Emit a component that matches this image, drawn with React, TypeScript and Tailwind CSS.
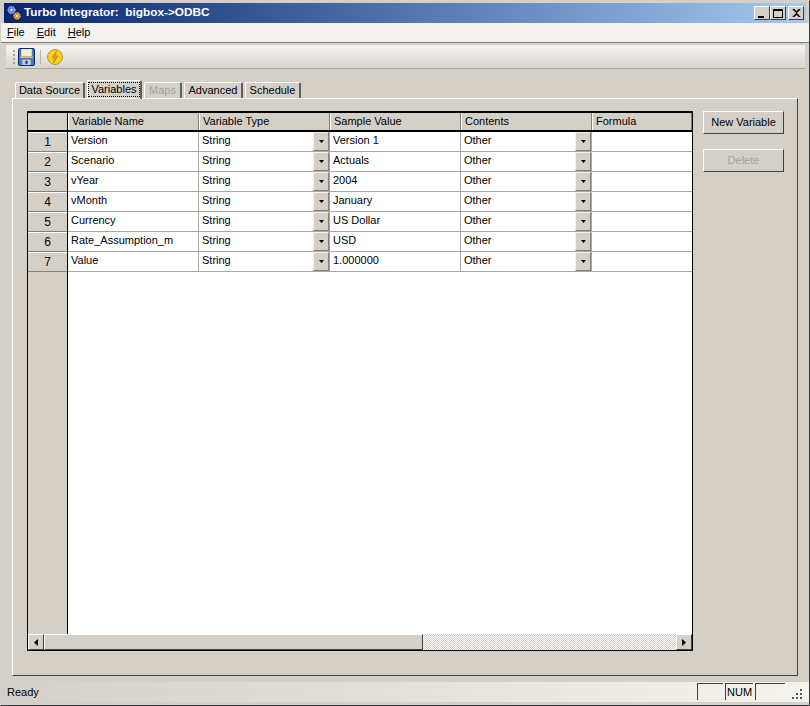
import React from 'react';

const rows = [
  { name: 'Version', sample: 'Version 1' },
  { name: 'Scenario', sample: 'Actuals' },
  { name: 'vYear', sample: '2004' },
  { name: 'vMonth', sample: 'January' },
  { name: 'Currency', sample: 'US Dollar' },
  { name: 'Rate_Assumption_m', sample: 'USD' },
  { name: 'Value', sample: '1.000000' },
];

const bevel = 'border border-t-white border-l-white border-r-[#404040] border-b-[#404040]';

function ComboCell({ value, width }: { value: string; width: string }) {
  return (
    <div className={`${width} flex h-full border-r border-[#a9a79f] bg-white`}>
      <div className="flex-1 pl-[3px] leading-[17px] truncate">{value}</div>
      <div className="w-[16px] bg-[#d4d0c8] flex items-center justify-center border border-t-[#f4f3ef] border-l-[#f4f3ef] border-r-[#808080] border-b-[#808080]">
        <svg width="5" height="3" viewBox="0 0 5 3"><path d="M0 0h5L2.500 3z" fill="#000" /></svg>
      </div>
    </div>
  );
}

function HeaderCell({ label, width }: { label: string; width: string }) {
  return (
    <div className={`${width} h-full pl-[3px] leading-[16px] border-r border-[#808080] border-l border-l-white bg-[#d4d0c8] truncate`}>{label}</div>
  );
}

function Tab({ label, active, disabled, width }: { label: string; active?: boolean; disabled?: boolean; width: string }) {
  return (
    <div
      className={`${width} ${active ? 'h-[19px] relative z-10 -mb-px' : 'h-[16px]'} flex items-center justify-center border-t border-l border-t-white border-l-white border-r-2 border-r-[#606060] rounded-t-[2px] mr-[2px] ${disabled ? 'text-[#a5a29b]' : 'text-black'}`}
    >
      <span className={active ? 'border border-dotted border-black px-[2px] leading-[13px] mb-[2px]' : 'leading-[13px]'}>{label}</span>
    </div>
  );
}

function CaptionButton({ children }: { children: React.ReactNode }) {
  return (
    <div className={`w-[16px] h-[14px] bg-[#d4d0c8] flex items-center justify-center ${bevel}`}>{children}</div>
  );
}

export default function App() {
  return (
    <div
      className="w-[810px] h-[706px] overflow-hidden bg-[#d4d0c8] flex flex-col text-[11px] text-black border border-[#d4d0c8] border-r-[#404040] border-b-[#404040] px-[3px] pt-[2px] pb-[3px]"
      style={{ fontFamily: '"Liberation Sans", Arial, sans-serif' }}
    >
      {/* title bar */}
      <div className="h-[20px] shrink-0 flex items-center bg-gradient-to-r from-[#0a246a] to-[#a6caf0] pl-[2px] pr-[2px]">
        <svg width="16" height="16" viewBox="0 0 16 16" className="shrink-0">
          <circle cx="5.500" cy="5" r="3.500" fill="#6f7fe0" stroke="#c8d0ff" strokeDasharray="1.500 1" />
          <circle cx="5.500" cy="5" r="1" fill="#fff" />
          <circle cx="11" cy="11" r="3.200" fill="#f08a20" stroke="#ffc070" strokeDasharray="1.500 1" />
          <circle cx="11" cy="11" r="1" fill="#fff" />
        </svg>
        <div className="ml-[2px] text-white font-bold text-[11.8px] whitespace-pre">Turbo Integrator:  bigbox-&gt;ODBC</div>
        <div className="ml-auto flex items-center">
          <CaptionButton>
            <div className="w-[6px] h-[2px] bg-black mt-[7px] mr-[2px]" />
          </CaptionButton>
          <CaptionButton>
            <div className="w-[10px] h-[9px] border border-black border-t-2" />
          </CaptionButton>
          <div className="ml-[2px]">
            <CaptionButton>
              <svg width="9" height="8" viewBox="0 0 9 8"><path d="M1 0l3.500 3.200L8 0M1 8l3.500-3.200L8 8" stroke="#000" strokeWidth="1.600" fill="none" /></svg>
            </CaptionButton>
          </div>
        </div>
      </div>

      {/* menu bar */}
      <div className="h-[19px] shrink-0 flex items-center bg-[#f4f2ee] -mx-[3px] pl-[6px] gap-[12px]">
        <span><u>F</u>ile</span>
        <span><u>E</u>dit</span>
        <span><u>H</u>elp</span>
      </div>

      {/* toolbar */}
      <div className="shrink-0 h-[27px] -mx-[3px] px-[3px] border-t border-[#808080] bg-[#d4d0c8] pt-[2px]">
        <div className="h-[24px] ml-[2px] mr-[1px] flex items-center bg-gradient-to-b from-[#f6f5f2] to-[#d8d5cd] border-b border-[#aaa79f] pl-[7px]">
          <div className="flex flex-col gap-[2px] mr-[3px]">
            <div className="w-[2px] h-[2px] bg-[#a8a59c]" />
            <div className="w-[2px] h-[2px] bg-[#a8a59c]" />
            <div className="w-[2px] h-[2px] bg-[#a8a59c]" />
            <div className="w-[2px] h-[2px] bg-[#a8a59c]" />
          </div>
          <svg width="17" height="18" viewBox="0 0 16 17">
            <rect x="0.500" y="0.500" width="15" height="16" rx="1.500" fill="#4a78c8" stroke="#0a2a70" />
            <rect x="3" y="1" width="10" height="7" fill="#f4f0d0" />
            <rect x="2" y="8" width="12" height="1.500" fill="#e8c040" />
            <rect x="4" y="11" width="8" height="5" fill="#c4cce0" />
            <rect x="7" y="12" width="2" height="3" fill="#1a3a80" />
          </svg>
          <div className="w-px h-[14px] bg-[#b5b2a9] ml-[5px] mr-[5px]" />
          <svg width="18" height="18" viewBox="0 0 18 18">
            <circle cx="9" cy="9" r="7.500" fill="#f4d020" stroke="#c89030" />
            <path d="M10.500 3L6 10h2.500L7.500 15l4.500-7H9.500z" fill="#e8a010" stroke="#a87808" strokeWidth="0.500" />
          </svg>
        </div>
      </div>

      {/* tabs */}
      <div className="shrink-0 h-[29px] flex items-end pl-[11px]">
        <Tab label="Data Source" width="w-[70px]" />
        <Tab label="Variables" width="w-[55px]" active />
        <Tab label="Maps" width="w-[38px]" disabled />
        <Tab label="Advanced" width="w-[59px]" />
        <Tab label="Schedule" width="w-[56px]" />
      </div>

      {/* tab page */}
      <div className="shrink-0 h-[578px] ml-[8px] mr-[8px] border border-t-white border-l-white border-r-[#404040] border-b-[#404040] flex pl-[14px] pt-[12px]">
        <div className="w-[666px] h-[540px] border border-black border-t-2 flex flex-col bg-white">
          <div className="flex h-[19px] shrink-0 border-b-2 border-black">
            <div className="w-[40px] h-full border-r border-black bg-[#d4d0c8]" />
            <HeaderCell label="Variable Name" width="w-[131px]" />
            <HeaderCell label="Variable Type" width="w-[131px]" />
            <HeaderCell label="Sample Value" width="w-[131px]" />
            <HeaderCell label="Contents" width="w-[131px]" />
            <HeaderCell label="Formula" width="w-[100px]" />
          </div>
          <div className="flex flex-1 min-h-0">
            <div className="w-[40px] shrink-0 border-r border-black bg-[#d4d0c8] flex flex-col">
              {rows.map((r, i) => (
                <div key={r.name} className="h-[20px] shrink-0 border-b border-[#808080] border-t border-t-white flex items-center justify-center text-[12px]">{i + 1}</div>
              ))}
            </div>
            <div className="flex-1 flex flex-col">
              {rows.map((r) => (
                <div key={r.name} className="h-[20px] shrink-0 flex border-b border-[#a9a79f]">
                  <div className="w-[131px] pl-[3px] leading-[17px] border-r border-[#a9a79f]">{r.name}</div>
                  <ComboCell value="String" width="w-[131px]" />
                  <div className="w-[131px] pl-[3px] leading-[17px] border-r border-[#a9a79f]">{r.sample}</div>
                  <ComboCell value="Other" width="w-[131px]" />
                  <div className="flex-1" />
                </div>
              ))}
            </div>
          </div>
          {/* horizontal scrollbar */}
          <div className="h-[16px] shrink-0 flex bg-[repeating-conic-gradient(#d4d0c8_0_25%,#ffffff_0_50%)] bg-[length:2px_2px]">
            <div className={`w-[16px] h-full bg-[#d4d0c8] flex items-center justify-center ${bevel}`}>
              <svg width="4" height="7" viewBox="0 0 4 7"><path d="M4 0v7L0 3.500z" fill="#000" /></svg>
            </div>
            <div className={`w-[379px] h-full bg-[#d4d0c8] ${bevel}`} />
            <div className="flex-1" />
            <div className={`w-[16px] h-full bg-[#d4d0c8] flex items-center justify-center ${bevel}`}>
              <svg width="4" height="7" viewBox="0 0 4 7"><path d="M0 0v7l4-3.500z" fill="#000" /></svg>
            </div>
          </div>
        </div>
        <div className="ml-[10px] flex flex-col gap-[15px]">
          <div className={`w-[81px] h-[23px] flex items-center justify-center ${bevel}`}>New Variable</div>
          <div className={`w-[81px] h-[23px] flex items-center justify-center text-[#a5a29b] ${bevel}`}>Delete</div>
        </div>
      </div>

      {/* status bar */}
      <div className="flex-1 mt-[6px] -mx-[3px] flex items-start bg-gradient-to-r from-[#d4d0c8] to-[#f4f3ee] pl-[6px] pr-[6px] pt-[1px]">
        <div className="leading-[18px]">Ready</div>
        <div className="ml-auto flex items-stretch h-[17px] gap-[2px]">
          <div className="w-[26px] border-t border-l border-[#404040]" />
          <div className="w-[28px] border-t border-l border-[#404040] leading-[17px] pl-[1px]">NUM</div>
          <div className="w-[30px] border-t border-l border-[#404040]" />
          <svg width="12" height="12" viewBox="0 0 12 12" className="self-end ml-[4px]">
            <path d="M9 1h2v2H9zM5 5h2v2H5zM9 5h2v2H9zM1 9h2v2H1zM5 9h2v2H5zM9 9h2v2H9z" fill="#555" />
          </svg>
        </div>
      </div>
    </div>
  );
}
